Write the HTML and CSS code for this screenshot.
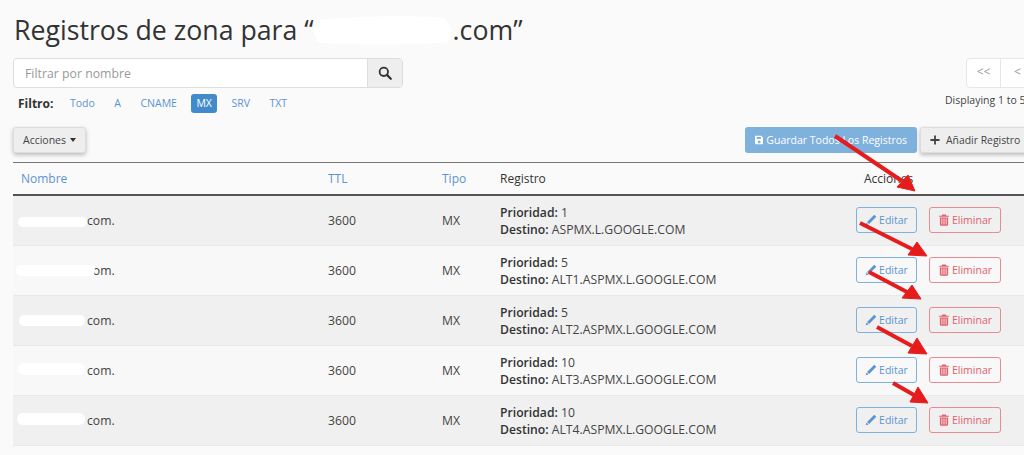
FILE: index.html
```html
<!DOCTYPE html>
<html lang="es">
<head>
<meta charset="utf-8">
<title>Registros de zona</title>
<link rel="stylesheet" href="styles.css">
</head>
<body>
<svg width="0" height="0" class="defs">
  <symbol id="pencil" viewBox="0 0 14 14"><path d="M10.800 .8 13.200 3.200 4.800 11.600 2.400 9.200Z M1.800 9.900 4.100 12.200 .8 13.200Z" fill="currentColor"/></symbol>
  <symbol id="trash" viewBox="0 0 14 14"><path d="M5 .6h4l.7 1.400h3v1.300H1.300V2h3Z M2.200 4h9.600v8.600c0 .6-.4 1-1 1H3.200c-.6 0-1-.4-1-1Z M4 5.200v7h1v-7Z M6.500 5.200v7h1v-7Z M9 5.200v7h1v-7Z" fill="currentColor" fill-rule="evenodd"/></symbol>
</svg>
<main class="page">
  <h1 class="title">Registros de zona para “<span class="hidden-name"></span>.com”</h1>
  <div class="controls">
    <div class="controls-left">
      <div class="search">
        <input class="search-input" type="text" placeholder="Filtrar por nombre">
        <button class="search-btn" aria-label="Buscar"><svg viewBox="0 0 14 14" width="14" height="14"><circle cx="5.800" cy="5.800" r="4.200" fill="none" stroke="currentColor" stroke-width="1.800"/><path d="M8.900 8.900 12.800 12.800" stroke="currentColor" stroke-width="2.200" stroke-linecap="round"/></svg></button>
      </div>
      <div class="filters">
        <strong class="filters-label">Filtro:</strong>
        <a class="pill">Todo</a><a class="pill">A</a><a class="pill">CNAME</a><a class="pill active">MX</a><a class="pill">SRV</a><a class="pill">TXT</a>
      </div>
    </div>
    <div class="controls-right">
      <div class="pager"><span class="page-box">&lt;&lt;</span><span class="page-box">&lt;</span></div>
      <div class="displaying">Displaying 1 to 5</div>
    </div>
  </div>
  <div class="toolbar">
    <button class="btn btn-default raised">Acciones <span class="caret"></span></button>
    <div class="toolbar-right">
      <button class="btn btn-save"><svg viewBox="1 1 12 12" width="10" height="10"><path fill-rule="evenodd" d="M1.500 1H10l3 3v8c0 .6-.4 1-1 1H2c-.6 0-1-.4-1-1V1.500Z M3.500 2.500v3.200h6V2.500Z M7 7.800a2 2 0 1 0 .01 0Z" fill="currentColor"/></svg> Guardar Todos Los Registros</button>
      <button class="btn btn-default raised add"><svg viewBox="0 0 12 12" width="10" height="10"><path d="M6 .5v11M.5 6h11" stroke="currentColor" stroke-width="2.200"/></svg> Añadir Registro</button>
    </div>
  </div>
  <table class="records">
    <thead>
      <tr><th class="c-name link">Nombre</th><th class="c-ttl link">TTL</th><th class="c-type link">Tipo</th><th class="c-rec">Registro</th><th class="c-act">Acciones</th></tr>
    </thead>
    <tbody>
      <tr><td class="name">com.</td><td>3600</td><td>MX</td><td class="rec"><b>Prioridad:</b> 1<br><b>Destino:</b> ASPMX.L.GOOGLE.COM</td><td class="actions"><button class="btn btn-edit"><svg width="12" height="12"><use href="#pencil"/></svg> Editar</button><button class="btn btn-del"><svg width="12" height="12"><use href="#trash"/></svg> Eliminar</button></td></tr>
      <tr><td class="name">com.</td><td>3600</td><td>MX</td><td class="rec"><b>Prioridad:</b> 5<br><b>Destino:</b> ALT1.ASPMX.L.GOOGLE.COM</td><td class="actions"><button class="btn btn-edit"><svg width="12" height="12"><use href="#pencil"/></svg> Editar</button><button class="btn btn-del"><svg width="12" height="12"><use href="#trash"/></svg> Eliminar</button></td></tr>
      <tr><td class="name">com.</td><td>3600</td><td>MX</td><td class="rec"><b>Prioridad:</b> 5<br><b>Destino:</b> ALT2.ASPMX.L.GOOGLE.COM</td><td class="actions"><button class="btn btn-edit"><svg width="12" height="12"><use href="#pencil"/></svg> Editar</button><button class="btn btn-del"><svg width="12" height="12"><use href="#trash"/></svg> Eliminar</button></td></tr>
      <tr><td class="name">com.</td><td>3600</td><td>MX</td><td class="rec"><b>Prioridad:</b> 10<br><b>Destino:</b> ALT3.ASPMX.L.GOOGLE.COM</td><td class="actions"><button class="btn btn-edit"><svg width="12" height="12"><use href="#pencil"/></svg> Editar</button><button class="btn btn-del"><svg width="12" height="12"><use href="#trash"/></svg> Eliminar</button></td></tr>
      <tr><td class="name">com.</td><td>3600</td><td>MX</td><td class="rec"><b>Prioridad:</b> 10<br><b>Destino:</b> ALT4.ASPMX.L.GOOGLE.COM</td><td class="actions"><button class="btn btn-edit"><svg width="12" height="12"><use href="#pencil"/></svg> Editar</button><button class="btn btn-del"><svg width="12" height="12"><use href="#trash"/></svg> Eliminar</button></td></tr>
    </tbody>
  </table>
</main>
<svg class="overlay" width="1024" height="455" viewBox="0 0 1024 455" aria-hidden="true">
  <g fill="#fff">
    <path d="M316 20 C350 16 420 15 444 18 C452 24 454 36 448 42 C420 45 345 46 318 42 C313 36 312 26 316 20Z"/>
    <rect x="18" y="217" width="69" height="10" rx="5"/>
    <rect x="16" y="265" width="79" height="11" rx="5"/>
    <rect x="19" y="315" width="66" height="11" rx="5"/>
    <rect x="18" y="363" width="67" height="12" rx="6"/>
    <rect x="17" y="413" width="68" height="12" rx="6"/>
  </g>
  <g fill="#e61c1c" stroke="#e61c1c">
    <path d="M835 136 902 181" stroke-width="4"/><path d="M915 191 897 187 908 175Z"/>
    <path d="M860 223 912 249" stroke-width="4"/><path d="M927 256 908 255 917 242Z"/>
    <path d="M869 272 907 292" stroke-width="4"/><path d="M921 299 902 298 912 285Z"/>
    <path d="M877 327 912 346" stroke-width="4"/><path d="M927 354 908 353 917 338Z"/>
    <path d="M893 383 914 395" stroke-width="4"/><path d="M928 403 910 402 918 387Z"/>
  </g>
</svg>
</body>
</html>
```
FILE: styles.css
```css
* { box-sizing: border-box; }
html, body { margin: 0; height: 455px; overflow: hidden; background: #fafafa; }
body { font-family: "Open Sans", "Liberation Sans", sans-serif; color: #333; font-size: 12px; width: 1024px; position: relative; }
.defs { position: absolute; }
.page { width: 1024px; padding: 0 0 0 13px; overflow: hidden; height: 455px; }
.title { margin: 0 0 0 1px; padding-top: 12px; height: 58px; font-size: 26.700px; font-weight: 400; line-height: 36px; color: #333; white-space: nowrap; }
.hidden-name { display: inline-block; width: 139px; height: 1px; }
.controls { display: flex; justify-content: space-between; height: 69px; width: 1047px; }
.controls-left { width: 390px; }
.search { display: flex; height: 30px; border: 1px solid #ddd; border-radius: 4px; background: #fff; overflow: hidden; }
.search-input { flex: 1; min-width: 0; border: 0; padding: 0 11px; font: 12.300px "Open Sans", sans-serif; background: transparent; outline: none; }
.search-input::placeholder { color: #999; opacity: 1; }
.search-btn { width: 35px; border: 0; border-left: 1px solid #ddd; background: #eee; color: #333; padding: 0; display: flex; align-items: center; justify-content: center; }
.filters { display: flex; align-items: center; margin-top: 5px; height: 20px; padding-left: 5px; }
.filters-label { font-weight: 700; font-size: 12px; width: 47px; }
.pill { display: block; padding: 0 5px; line-height: 19px; height: 19px; font-size: 10.500px; color: #5c94d1; border-radius: 3px; margin-right: 9.500px; }
.active { background: #428bca; color: #fff; }
.controls-right { width: 115px; display: flex; flex-direction: column; align-items: flex-start; }
.pager { display: flex; margin-left: 21px; height: 30px; }
.page-box { width: 35px; height: 30px; background: #fff; border: 1px solid #e6e6e6; margin-right: -1px; color: #999; text-align: center; line-height: 26px; font-size: 12px; }
.page-box:first-child { border-radius: 4px 0 0 4px; }
.displaying { font-size: 10.500px; margin-top: 5px; white-space: nowrap; color: #444; }
.toolbar { display: flex; justify-content: space-between; height: 35px; width: 1047px; }
.btn { height: 26px; font: 10.500px "Open Sans", sans-serif; border-radius: 3px; border: 1px solid transparent; padding: 0 9px; white-space: nowrap; display: inline-flex; align-items: center; gap: 3px; }
.btn-default { background: #eee; color: #444; border-color: #ddd; }
.raised { box-shadow: 0 2px 4px rgba(0,0,0,.25); }
.caret { display: inline-block; border-top: 4px solid #333; border-left: 3.500px solid transparent; border-right: 3.500px solid transparent; margin-left: 1px; }
.toolbar-right { display: flex; gap: 3px; width: 315px; }
.btn-save { width: 172px; background: #7fb1dd; color: #fff; justify-content: center; }
.add { gap: 6px; width: 130px; padding-left: 9px; font-size: 10.400px; }
.records { border-collapse: collapse; table-layout: fixed; width: 1047px; }
.records th { height: 32px; padding: 0 8px; font-weight: 400; font-size: 12px; text-align: left; border-top: 1px solid #777; border-bottom: 2px solid #555; color: #333; }
.records th.link { color: #5c94d1; }
.c-name { width: 307px; }
.c-ttl { width: 114px; }
.c-type { width: 58px; }
.c-rec { width: 356px; }
.records th.c-act { padding-left: 16px; }
.records td { height: 50px; padding: 0 8px; font-size: 12.200px; line-height: 17px; color: #444; border-bottom: 1px solid #e8e8e8; white-space: nowrap; }
.records td.name { padding-left: 74px; }
.records td.rec { padding-top: 1px; }
.records b { font-weight: 600; color: #333; }
.records tbody tr:nth-child(odd) { background: #f0f0f0; }
.records tbody tr:nth-child(even) { background: #f8f8f8; }
.actions { display: flex; align-items: center; gap: 12px; }
.btn-edit { width: 61px; background: transparent; border-color: #7fb1dd; color: #5c94d1; justify-content: center; padding: 0; gap: 2px; }
.btn-del { width: 72px; background: transparent; border-color: #e88a92; color: #e0606c; justify-content: center; padding: 0; gap: 2px; }
.overlay { position: absolute; left: 0; top: 0; pointer-events: none; }
```
